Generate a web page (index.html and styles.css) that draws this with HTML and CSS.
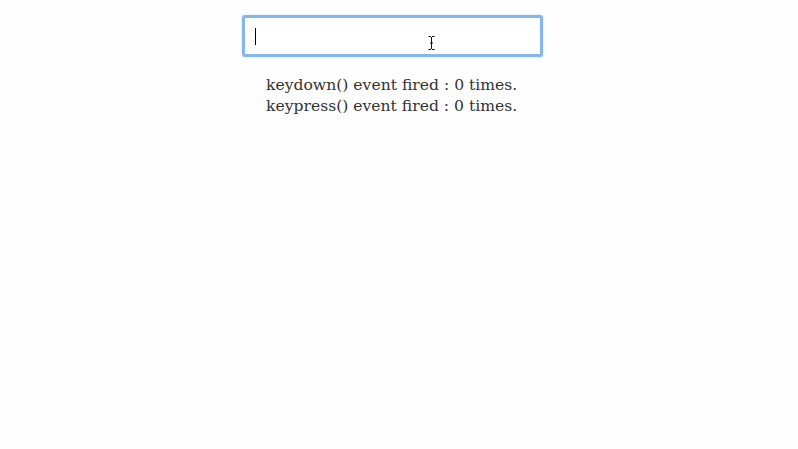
FILE: index.html
```html
<!DOCTYPE html>
<html>
<head>
<meta charset="utf-8">
<link rel="stylesheet" href="styles.css">
</head>
<body>
<div class="wrap">
  <div class="field">
    <span class="caret"></span>
    <svg class="ibeam" width="7" height="14" viewBox="0 0 7 14"><path d="M0.5 0.5h2.5M4 0.5h2.5M3.5 1v12M0.5 13.5h2.5M4 13.5h2.5M2 7h3" stroke="#111" stroke-width="1" fill="none"/></svg>
  </div>
  <div class="log">
    <div>keydown() event fired : 0 times.</div>
    <div>keypress() event fired : 0 times.</div>
  </div>
</div>
</body>
</html>
```
FILE: styles.css
```css
html, body { margin: 0; padding: 0; background: #fefefe; }
body { font-family: "DejaVu Serif", "Liberation Serif", serif; color: #333; }
.wrap { margin-left: 242px; padding-top: 15px; width: 301px; }
.field {
  position: relative;
  box-sizing: border-box;
  width: 301px; height: 42px;
  border: 3px solid #86b6ec;
  border-radius: 3px;
  box-shadow: 0 0 2px 0 #b8d4f4;
  background: #fff;
}
.caret { position: absolute; left: 10px; top: 10px; width: 1px; height: 17px; background: #000; }
.ibeam { position: absolute; left: 183px; top: 18px; }
.log { padding-left: 24px; padding-top: 18px; font-size: 15.6px; line-height: 21px; }
```
